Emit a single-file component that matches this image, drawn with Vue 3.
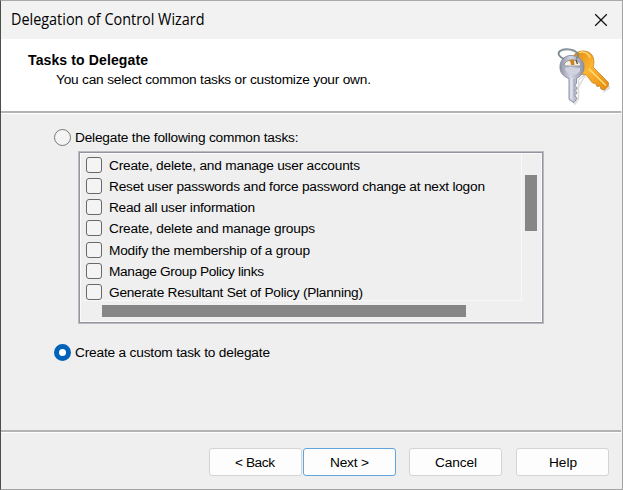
<script setup>
import { ref } from 'vue'

const tasks = ref([
  { label: 'Create, delete, and manage user accounts', w: 251 },
  { label: 'Reset user passwords and force password change at next logon', w: 376 },
  { label: 'Read all user information', w: 146 },
  { label: 'Create, delete and manage groups', w: 206 },
  { label: 'Modify the membership of a group', w: 201 },
  { label: 'Manage Group Policy links', w: 155 },
  { label: 'Generate Resultant Set of Policy (Planning)', w: 254 },
])
const mode = ref('custom')
</script>

<template>
  <div class="window">
    <header class="titlebar">
      <svg class="fit title" width="196" height="20"><text x="0" y="15" textLength="193.500" lengthAdjust="spacingAndGlyphs">Delegation of Control Wizard</text></svg>
      <svg class="close" width="14" height="14" viewBox="0 0 14 14">
        <path d="M1.2 1.2 12.8 12.8M12.8 1.2 1.2 12.8" fill="none" stroke="#111" stroke-width="1.25" />
      </svg>
    </header>

    <section class="banner">
      <div class="heading">
        <svg class="fit bold" width="124" height="19"><text x="0" y="13.500" textLength="120">Tasks to Delegate</text></svg>
        <svg class="fit sub" width="318" height="19"><text x="0" y="13.500" textLength="315">You can select common tasks or customize your own.</text></svg>
      </div>
      <svg class="keys" width="56" height="60" viewBox="0 0 56 60">
        <defs>
          <linearGradient id="gold" x1="0" y1="0" x2="1" y2="1">
            <stop offset="0" stop-color="#d98a14" />
            <stop offset=".45" stop-color="#ffb52e" />
            <stop offset="1" stop-color="#e38a10" />
          </linearGradient>
          <linearGradient id="silver" x1="0" y1="0" x2="1" y2="0">
            <stop offset="0" stop-color="#8f93a6" />
            <stop offset=".45" stop-color="#d4d7e4" />
            <stop offset="1" stop-color="#8c90a5" />
          </linearGradient>
          <filter id="soft" x="-20%" y="-20%" width="140%" height="140%">
            <feGaussianBlur stdDeviation=".7" />
          </filter>
        </defs>
        <path d="M15 53 19 57 22.500 52V33L28 28 37 38 48 44.500 53.500 41 52 37 34 20Z" fill="none" stroke="#777" stroke-width="1.500" opacity=".25" filter="url(#soft)" />
        <path d="M28 27 36.500 36 39.500 36.500 41 39.500 44 39 45 42 48 44.500 30 44V30Z" fill="#fff" />
        <path d="M20 6C26 2 35 4 37 10C38.500 14 38 18 37 20L52.500 35.500 52 39.500 48.500 43 45 42 44 39 41 39.500 39.500 36.500 36.500 36 30 27.500C25 29 19 24 18 18C17 13 17 8 20 6Z" fill="url(#gold)" stroke="#c58228" stroke-width=".8" />
        <path d="M33 22 50 38.500" stroke="#ffdb7d" stroke-width="1.700" />
        <path d="M23 5.500C29 4 33 7 34 11" fill="none" stroke="#ffd46c" stroke-width="1.500" />
        <path d="M15 8.500C22 8.500 28 13 28 20C28 25 25.500 29 20.500 31.500V36L19 38.500 21 41 19 43.500 21 46 19 48.500 21 51.500 18 55.500 13 52.500V31.500C7 29.500 3.500 25 4 19C4.500 12.500 9 8.500 15 8.500Z" fill="url(#silver)" stroke="#85899d" stroke-width=".9" />
        <path d="M8 18C9 11.500 23 11 25 18L23 19H10Z" fill="#f7f2e5" stroke="#858899" stroke-width=".8" />
        <path d="M12.500 13 18 12.500 18.500 18H15L14.500 15Z" fill="#ca8424" />
        <path d="M20 13 21.500 17" stroke="#544939" stroke-width="1.300" />
        <path d="M9 21H24V24Q21 28 16 28Q10 27 9 21Z" fill="#d0d3df" />
        <path d="M15.500 31V51.500" stroke="#dfe2ed" stroke-width="2" />
        <path d="M18 32V50" stroke="#9da1b4" stroke-width=".8" />
        <path d="M8 12C3 10 1 6.500 4 4C8 1 18 2 21 6C23 8 22 11 20 12" fill="none" stroke="#7e8a90" stroke-width="1.800" />
        <path d="M5 4.500C9 1.800 17 3 20 6.500" fill="none" stroke="#b4bdc2" stroke-width=".7" />
      </svg>
    </section>

    <main class="content">
      <label class="option">
        <span class="radio" :class="{ on: mode === 'common' }" />
        <svg class="fit" width="226" height="18"><text x="0" y="14" textLength="223.500">Delegate the following common tasks:</text></svg>
      </label>
      <div class="listbox">
        <div class="pane">
          <label v-for="t in tasks" :key="t.label" class="task">
            <span class="check" />
            <svg class="fit" :width="t.w + 3" height="18"><text x="0" y="13.500" :textLength="t.w">{{ t.label }}</text></svg>
          </label>
        </div>
        <div class="vbar"><div class="vthumb" /></div>
        <div class="hbar"><div class="hthumb" /></div>
      </div>
      <label class="option custom">
        <span class="radio" :class="{ on: mode === 'custom' }" />
        <svg class="fit" width="198" height="18"><text x="0" y="14" textLength="195">Create a custom task to delegate</text></svg>
      </label>
    </main>

    <footer class="actions">
      <button><svg class="fit" width="42" height="18"><text x="0" y="14" textLength="40">&lt; Back</text></svg></button>
      <button class="primary"><svg class="fit" width="40" height="18"><text x="0" y="14" textLength="39">Next &gt;</text></svg></button>
      <button class="cancel"><svg class="fit" width="42" height="18"><text x="0" y="14" textLength="42">Cancel</text></svg></button>
      <button class="help"><svg class="fit" width="28" height="18"><text x="0" y="14" textLength="28">Help</text></svg></button>
    </footer>
  </div>
</template>

<style>
body { margin: 0; overflow: hidden; }
</style>

<style scoped>
.window {
  box-sizing: border-box;
  width: 623px;
  height: 490px;
  display: flex;
  flex-direction: column;
  border: 1px solid #a3a3a3;
  border-left-color: #4b5046;
  border-top-color: #a8aaa7;
  background: #efefef;
  color: #000;
  font-family: "Liberation Sans", Arial, sans-serif;
  font-size: 13.7px;
}
.titlebar {
  height: 38px;
  flex: none;
  display: flex;
  align-items: center;
  justify-content: space-between;
  padding: 0 14px 0 10px;
  box-sizing: border-box;
  background: #f2f2f2;
}
.title {
  font-family: "Open Sans", "Noto Sans", sans-serif;
  font-size: 15.5px;
}
.close { display: block; }
.banner {
  height: 72px;
  flex: none;
  display: flex;
  justify-content: space-between;
  padding: 0 10px 0 27px;
  box-sizing: border-box;
  background: #fff;
}
.heading { padding-top: 12px; }
.bold { font-weight: bold; font-size: 14px; }
.sub { margin-left: 28px; }
.keys { margin-top: 8px; display: block; }
.content {
  height: 321px;
  flex: none;
  box-sizing: border-box;
  margin-right: 1px;
  padding: 15px 0 0 53px;
  border-top: 2px solid #b3b3b3;
  border-bottom: 2px solid #b3b3b3;
  box-shadow: inset 0 1px #fff, 0 1px #fff;
}
.option { display: flex; align-items: center; height: 18px; gap: 4px; }
.radio {
  box-sizing: border-box;
  width: 17px;
  height: 17px;
  border: 1px solid #777;
  border-radius: 50%;
  background: #f4f4f4;
}
.radio.on { border: 5px solid #0062b8; background: #fff; }
.fit { display: block; overflow: visible; fill: #000; }
.listbox {
  box-sizing: border-box;
  width: 466px;
  height: 173px;
  margin: 5px 0 0 24px;
  padding: 2px;
  border: 1px solid #b9bbc0;
  box-shadow: inset 0 0 0 1px #92959e, inset 0 0 0 2px #fafafa;
  display: grid;
  grid-template-columns: 441px 1fr;
  grid-template-rows: 147px 1fr;
}
.pane {
  box-sizing: border-box;
  border-right: 1px solid #f8f8f8;
  border-bottom: 1px solid #f8f8f8;
  padding: 0 0 0 5px;
}
.task { display: flex; align-items: center; gap: 6.500px; height: 21.25px; }
.check {
  box-sizing: border-box;
  width: 16px;
  height: 16px;
  border: 1px solid #686868;
  border-radius: 3px;
  background: #f4f4f4;
}
.vbar { padding: 21px 0 0 3px; }
.vthumb { width: 12px; height: 56px; background: #868686; }
.hbar { padding: 4px 0 0 21px; }
.hthumb { width: 364px; height: 12px; background: #868686; }
.custom { margin-top: 19px; }
.actions {
  display: flex;
  padding: 16px 0 0 208px;
}
button {
  box-sizing: border-box;
  width: 93px;
  height: 28px;
  padding: 0;
  display: flex;
  align-items: center;
  justify-content: center;
  border: 1px solid #d4d4d4;
  border-radius: 3px;
  background: #fdfdfd;
  color: #000;
  font: inherit;
}
.primary { margin-left: 1px; border-color: #62a5dc; }
.cancel { margin-left: 13px; }
.help { margin-left: 14px; }
</style>
